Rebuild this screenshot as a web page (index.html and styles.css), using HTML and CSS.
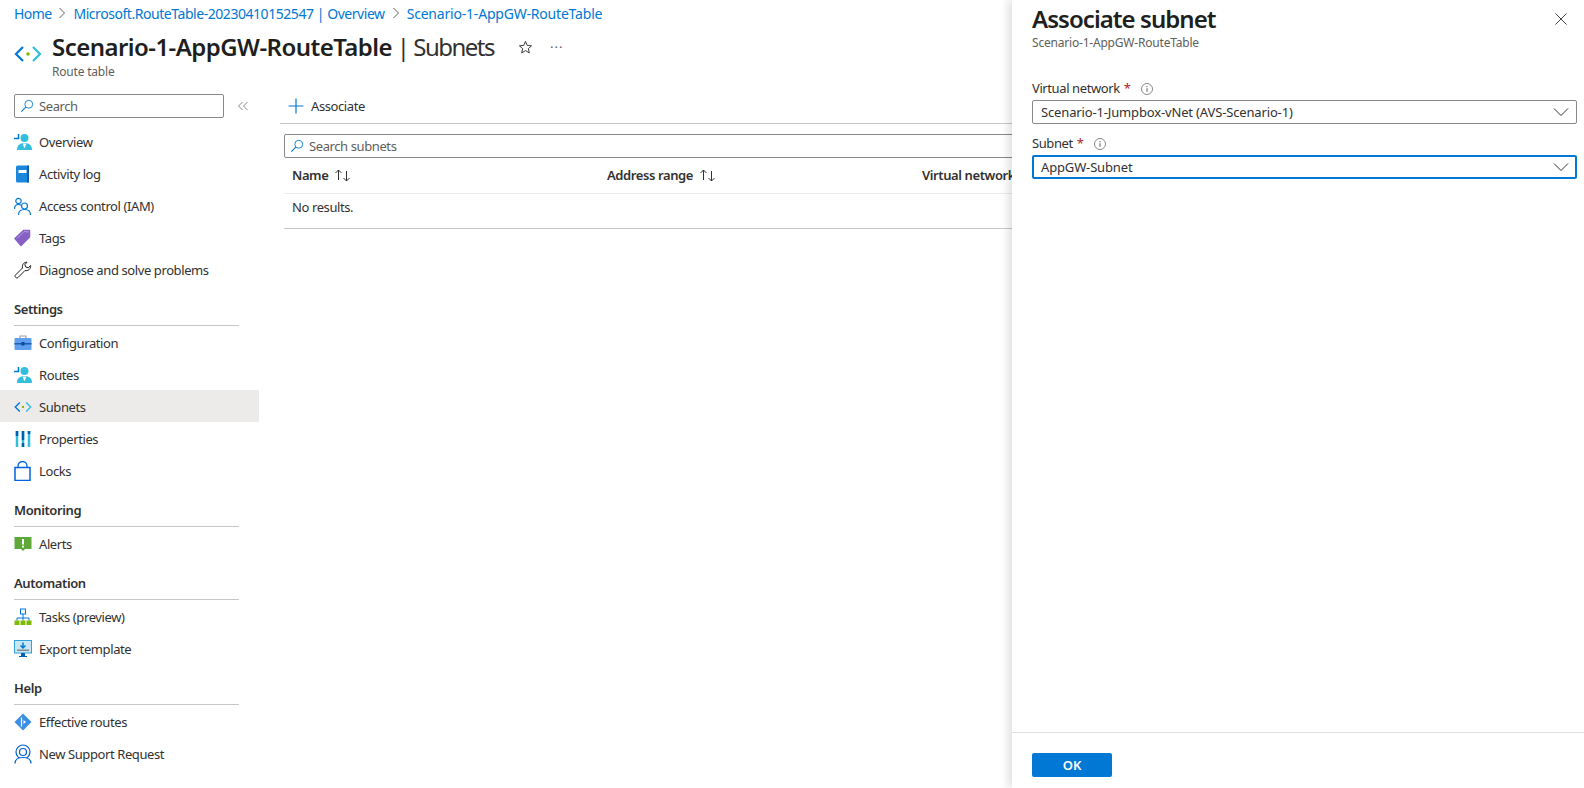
FILE: index.html
```html
<!DOCTYPE html>
<html lang="en">
<head>
<meta charset="UTF-8">
<meta name="viewport" content="width=device-width, initial-scale=1.0">
<title>Scenario-1-AppGW-RouteTable | Subnets</title>
<link rel="stylesheet" href="styles.css">
</head>
<body>
<svg class="defs" width="0" height="0">
  <symbol id="i-search" viewBox="0 0 16 16"><circle cx="10" cy="6" r="4.5" fill="none" stroke="#0078d4" stroke-width="1"/><path d="M6.7 9.3 1.5 14.5" stroke="#0078d4" stroke-width="1.2" fill="none"/></symbol>
  <symbol id="i-person" viewBox="0 0 18 18"><circle cx="10.5" cy="5" r="4" fill="#32bedd"/><path d="M3 17c0-5 3-7 7.500-7s7.500 2 7.500 7z" fill="#32bedd"/><path d="M8.500 10.500h4l-2 5z" fill="#fff"/><path d="M0 5.500h4.500V1" stroke="#0078d4" stroke-width="1.500" fill="none"/></symbol>
  <symbol id="i-sort" viewBox="0 0 18 14"><path d="M4.500 12V2M1.500 5l3-3 3 3" stroke="#323130" fill="none"/><path d="M12.500 3v10M9.500 10l3 3 3-3" stroke="#323130" fill="none"/></symbol>
  <symbol id="i-chevron" viewBox="0 0 16 16"><path d="M1 4.500 8 11.500l7-7" stroke="#323130" fill="none"/></symbol>
  <symbol id="i-crumb" viewBox="0 0 8 12"><path d="M1.500 1 6.500 6l-5 5" stroke="#605e5c" fill="none"/></symbol>
  <symbol id="i-info" viewBox="0 0 12 12"><circle cx="6" cy="6" r="5.500" fill="none" stroke="#8a8886"/><path d="M6 5.200v3.600" stroke="#605e5c"/><path d="M6 3v1.200" stroke="#605e5c"/></symbol>
  <symbol id="i-subnet" viewBox="0 0 28 18"><path d="M9 2 2 9l7 7" stroke="#0078d4" stroke-width="2.200" fill="none"/><path d="M19 2l7 7-7 7" stroke="#32bedd" stroke-width="2.200" fill="none"/><circle cx="14" cy="9" r="1.800" fill="#7fba00"/></symbol>
</svg>

<div class="breadcrumb">
  <a class="crumb-home">Home</a>
  <svg class="crumb-sep" width="8" height="12"><use href="#i-crumb"/></svg>
  <a class="crumb-long">Microsoft.RouteTable-20230410152547 | Overview</a>
  <svg class="crumb-sep" width="8" height="12"><use href="#i-crumb"/></svg>
  <a>Scenario-1-AppGW-RouteTable</a>
</div>

<div class="blade-head">
  <svg class="blade-icon" width="28" height="18"><use href="#i-subnet"/></svg>
  <div class="blade-titles">
    <div class="title-row">
      <h1><span class="title-name">Scenario-1-AppGW-RouteTable</span> | Subnets</h1>
      <svg class="star" width="15" height="15" viewBox="0 0 16 16"><path d="M8 1.500l1.900 4.300 4.600.4-3.500 3 1.100 4.600L8 11.300l-4.100 2.500L5 9.200l-3.500-3 4.600-.4z" fill="none" stroke="#323130"/></svg>
      <span class="more">&#183;&#183;&#183;</span>
    </div>
    <div class="blade-sub">Route table</div>
  </div>
</div>

<div class="blade-body">
  <nav class="sidebar">
    <div class="side-search-row">
      <div class="search-box side-search">
        <svg width="14" height="14"><use href="#i-search"/></svg>
        <span>Search</span>
      </div>
      <svg class="collapse" width="12" height="10" viewBox="0 0 12 10"><path d="M5.500 1 1.500 5l4 4M10.500 1l-4 4 4 4" stroke="#8a8886" fill="none"/></svg>
    </div>

    <div class="nav-row"><svg class="nav-icon" width="18" height="18"><use href="#i-person"/></svg>Overview</div>
    <div class="nav-row">
      <svg class="nav-icon" width="18" height="18" viewBox="0 0 18 18"><rect x="2" y="0.500" width="13" height="17" rx="1.500" fill="#1b87dc"/><rect x="4.500" y="5" width="8" height="3" fill="#fff"/><rect x="13" y="0.500" width="2" height="17" fill="#0f5fa8"/></svg>Activity log</div>
    <div class="nav-row">
      <svg class="nav-icon" width="18" height="18" viewBox="0 0 18 18"><circle cx="4.500" cy="4" r="2.700" fill="none" stroke="#0078d4" stroke-width="1.200"/><path d="M.5 12c0-3 1.500-4.500 4-4.500 1 0 1.800.2 2.500.7" fill="none" stroke="#0078d4" stroke-width="1.200"/><circle cx="10.500" cy="9" r="3" fill="none" stroke="#0078d4" stroke-width="1.200"/><path d="M4.500 18c0-3.500 2.500-5.500 6-5.500s6 2 6 5.500" fill="none" stroke="#0078d4" stroke-width="1.200"/></svg>Access control (IAM)</div>
    <div class="nav-row">
      <svg class="nav-icon" width="18" height="18" viewBox="0 0 18 18"><path d="M1 9.500 9.500 1.500 15.500 1.500 15.500 8 7 16.500z" fill="#8661c5" stroke="#8661c5" stroke-linejoin="round" stroke-width="1.500"/><path d="M3 9.500 10 2.500l5 .5" stroke="#b59ae0" fill="none"/></svg>Tags</div>
    <div class="nav-row">
      <svg class="nav-icon" width="18" height="18" viewBox="0 0 18 18"><path d="M1.500 14 8.500 7C7.800 4 9.800 1 13 1.200L10.800 3.700l1 2.300 2.400.8L16.600 4.500C17 8 14 10.300 11 9.500L4 16.500c-1.500 1.500-4 -1-2.500-2.500z" fill="none" stroke="#201f1e" stroke-width="1"/></svg>Diagnose and solve problems</div>

    <div class="nav-group">Settings</div>
    <div class="nav-row">
      <svg class="nav-icon" width="18" height="18" viewBox="0 0 18 18"><path d="M6 4V2h6v2" fill="none" stroke="#a19f9d" stroke-width="1.200"/><rect x="0.500" y="4" width="17" height="12" rx="1" fill="#5ea0ef"/><rect x="0.500" y="9" width="17" height="1.500" fill="#1b5fb5"/><rect x="7.500" y="8" width="3" height="3.500" fill="#0f4a94"/></svg>Configuration</div>
    <div class="nav-row"><svg class="nav-icon" width="18" height="18"><use href="#i-person"/></svg>Routes</div>
    <div class="nav-row nav-row-active"><svg class="nav-icon" width="18" height="12"><use href="#i-subnet"/></svg>Subnets</div>
    <div class="nav-row">
      <svg class="nav-icon" width="18" height="18" viewBox="0 0 18 18"><path d="M3 1v16M9 1v16M15 1v16" stroke="#32bedd" stroke-width="2.500"/><path d="M3 1v5M9 1v9M15 1v3" stroke="#0060b0" stroke-width="2.500"/><path d="M9 13v4" stroke="#0060b0" stroke-width="2.500"/></svg>Properties</div>
    <div class="nav-row">
      <svg class="nav-icon" width="18" height="20" viewBox="0 0 18 20"><path d="M4 6.500V5a4.500 4.500 0 0 1 9 0v1.500" fill="none" stroke="#0063e0" stroke-width="1.300"/><rect x="1" y="6.500" width="15" height="13" fill="#fff" stroke="#0063e0" stroke-width="1.500"/></svg>Locks</div>

    <div class="nav-group">Monitoring</div>
    <div class="nav-row">
      <svg class="nav-icon" width="18" height="16" viewBox="0 0 18 16"><path d="M.5 1h17v12H11l-2 2-2-2H.5z" fill="#5ea83a"/><path d="M9 3v5.500" stroke="#fff" stroke-width="2"/><path d="M9 9.800v1.800" stroke="#fff" stroke-width="2"/></svg>Alerts</div>

    <div class="nav-group">Automation</div>
    <div class="nav-row">
      <svg class="nav-icon" width="18" height="18" viewBox="0 0 18 18"><rect x="6.500" y="1" width="5" height="5" fill="#fff" stroke="#0078d4"/><path d="M9 6v4M3 12.500V10h12v2.500M9 10v2.500" stroke="#0078d4" fill="none"/><rect x="0.500" y="12.500" width="5" height="4.500" fill="#7fba00"/><rect x="6.500" y="12.500" width="5" height="4.500" fill="#7fba00"/><rect x="12.500" y="12.500" width="5" height="4.500" fill="#7fba00"/></svg>Tasks (preview)</div>
    <div class="nav-row">
      <svg class="nav-icon" width="18" height="18" viewBox="0 0 18 18"><rect x="0.500" y="0.500" width="17" height="12.500" fill="#c7e6f7" stroke="#32a0dd"/><path d="M9 2.500v5M6.500 5.500 9 8l2.500-2.500" stroke="#0078d4" stroke-width="1.500" fill="none"/><rect x="3" y="9.500" width="12" height="1.500" fill="#8a8886"/><path d="M7.500 13.500h3V16h-3zM5 16.500h8" stroke="#0060b0" fill="#0060b0"/></svg>Export template</div>

    <div class="nav-group">Help</div>
    <div class="nav-row">
      <svg class="nav-icon" width="18" height="18" viewBox="0 0 18 18"><path d="M9 .5 17.500 9 9 17.500.5 9z" fill="#3a8ee6"/><path d="M7.500 4.500v9" stroke="#fff" stroke-width="1.300"/><path d="M9.500 7l2.500 2-2.500 2z" fill="#fff"/></svg>Effective routes</div>
    <div class="nav-row">
      <svg class="nav-icon" width="18" height="20" viewBox="0 0 18 20"><circle cx="9" cy="8" r="7" fill="none" stroke="#0060d0" stroke-width="1.200"/><circle cx="9" cy="8" r="3.500" fill="none" stroke="#0060d0" stroke-width="1.200"/><path d="M1 19.500c0-4 3-6 8-6s8 2 8 6" fill="#fff" stroke="#0060d0" stroke-width="1.200"/></svg>New Support Request</div>
  </nav>

  <main class="content">
    <div class="toolbar">
      <svg width="16" height="16" viewBox="0 0 16 16"><path d="M8 .5v15M.5 8h15" stroke="#0078d4" stroke-width="1.200"/></svg>
      <span>Associate</span>
    </div>
    <div class="search-box table-search">
      <svg width="14" height="14"><use href="#i-search"/></svg>
      <span>Search subnets</span>
    </div>
    <div class="table-head">
      <div class="col-name">Name <svg width="18" height="14"><use href="#i-sort"/></svg></div>
      <div class="col-range">Address range <svg width="18" height="14"><use href="#i-sort"/></svg></div>
      <div class="col-vnet">Virtual network</div>
    </div>
    <div class="table-empty">No results.</div>
  </main>
</div>

<aside class="panel">
  <div class="panel-top">
    <div class="panel-head">
      <div>
        <h2>Associate subnet</h2>
        <div class="panel-sub">Scenario-1-AppGW-RouteTable</div>
      </div>
      <svg class="close" width="12" height="12" viewBox="0 0 13 13"><path d="M.5.5l12 12M12.500.5l-12 12" stroke="#323130"/></svg>
    </div>
    <label class="field-label">Virtual network <b>*</b> <svg width="12" height="12"><use href="#i-info"/></svg></label>
    <div class="dropdown">
      <span>Scenario-1-Jumpbox-vNet (AVS-Scenario-1)</span>
      <svg width="16" height="16"><use href="#i-chevron"/></svg>
    </div>
    <label class="field-label">Subnet <b>*</b> <svg width="12" height="12"><use href="#i-info"/></svg></label>
    <div class="dropdown dropdown-focus">
      <span>AppGW-Subnet</span>
      <svg width="16" height="16"><use href="#i-chevron"/></svg>
    </div>
  </div>
  <div class="panel-foot">
    <button class="ok-btn">OK</button>
  </div>
</aside>
</body>
</html>
```

FILE: styles.css
```css
* {
  box-sizing: border-box;
}
html, body {
  height: 100%;
}
body {
  margin: 0;
  height: 788px;
  overflow: hidden;
  font-family: "Noto Sans", "Open Sans", sans-serif;
  font-size: 13px;
  letter-spacing: -0.4px;
  color: #323130;
  background-color: #fff;
}
.defs {
  display: block;
  height: 0;
}

.breadcrumb {
  display: flex;
  align-items: center;
  height: 26px;
  padding-left: 14px;
  font-size: 14px;
  letter-spacing: -0.2px;
  color: #0078d4;
}
.crumb-home {
  letter-spacing: -0.6px;
}
.crumb-long {
  letter-spacing: -0.45px;
}
.crumb-sep {
  margin: 0 7px 0 7px;
}

.blade-head {
  display: flex;
  height: 57px;
}
.blade-icon {
  margin: 19px 0 0 14px;
}
.blade-titles {
  margin-left: 10px;
}
.title-row {
  display: flex;
  align-items: center;
  height: 42px;
}
h1 {
  margin: 0;
  font-size: 24px;
  font-weight: 400;
  letter-spacing: -1.5px;
  line-height: 42px;
}
.title-name {
  font-weight: 600;
  letter-spacing: -0.55px;
  color: #201f1e;
}
.star {
  margin-left: 24px;
}
.more {
  margin-left: 17px;
  font-size: 13px;
  color: #605e5c;
  letter-spacing: 1px;
}
.blade-sub {
  margin-top: -5px;
  font-size: 12px;
  letter-spacing: -0.2px;
  color: #605e5c;
}

.blade-body {
  display: flex;
}
.sidebar {
  width: 259px;
  flex-shrink: 0;
  padding-top: 11px;
}
.side-search-row {
  display: flex;
  align-items: center;
  padding-left: 14px;
  margin-bottom: 8px;
}
.search-box {
  display: flex;
  align-items: center;
  gap: 5px;
  height: 24px;
  padding-left: 5px;
  border: 1px solid #8a8886;
  border-radius: 2px;
  color: #605e5c;
}
.side-search {
  width: 210px;
}
.collapse {
  margin-left: 13px;
}

.nav-row {
  display: flex;
  align-items: center;
  height: 32px;
  padding-left: 14px;
}
.nav-row-active {
  margin: -1px 0 1px;
  padding-top: 2px;
  background-color: #edebe9;
}
.nav-icon {
  width: 18px;
  margin-right: 7px;
  flex-shrink: 0;
}
.nav-group {
  height: 33px;
  margin: 7px 20px 1px 14px;
  padding-top: 8px;
  border-bottom: 1px solid #c8c6c6;
  font-weight: 600;
  color: #323130;
  line-height: 16px;
}

.content {
  flex: 1;
  padding: 11px 0 0 21px;
}
.toolbar {
  display: flex;
  align-items: center;
  gap: 7px;
  height: 30px;
  padding: 0 0 6px 8px;
  border-bottom: 1px solid #c8c6c6;
}
.table-search {
  margin: 10px 0 0 4px;
  border-radius: 2px 0 0 2px;
}
.table-head {
  display: flex;
  align-items: center;
  height: 36px;
  padding-bottom: 2px;
  border-bottom: 1px solid #edebe9;
  margin-left: 4px;
  padding-left: 8px;
  font-weight: 600;
}
.table-head svg {
  vertical-align: -2px;
  margin-left: 3px;
}
.col-name,
.col-range {
  width: 315px;
  white-space: nowrap;
}
.col-vnet {
  white-space: nowrap;
}
.table-empty {
  height: 35px;
  margin-left: 4px;
  padding: 4px 0 0 8px;
  border-bottom: 1px solid #c8c6c6;
}

/* context pane sits over the blade */
.panel {
  position: absolute;
  top: 0;
  right: 0;
  bottom: 0;
  width: 572px;
  height: 788px;
  display: flex;
  flex-direction: column;
  background-color: #fff;
  box-shadow: -4px 0 8px rgba(0,0,0,0.12);
}
.panel-top {
  flex: 1;
  padding-left: 20px;
  padding-right: 7px;
}
.panel-head {
  display: flex;
  justify-content: space-between;
  height: 81px;
}
h2 {
  margin: 0;
  padding-top: 2px;
  padding-bottom: 1px;
  font-size: 24px;
  font-weight: 600;
  line-height: 33px;
  letter-spacing: -0.95px;
  color: #201f1e;
}
.panel-sub {
  margin-top: 0;
  font-size: 12px;
  line-height: 14px;
  letter-spacing: -0.2px;
  color: #605e5c;
}
.close {
  margin: 13px 10px 0 0;
}
.field-label {
  display: flex;
  align-items: center;
  gap: 4px;
  height: 19px;
  padding-bottom: 4px;
  line-height: 15px;
}
.field-label b {
  font-weight: 400;
  color: #a4262c;
}
.field-label svg {
  margin-left: 6px;
}
.dropdown {
  display: flex;
  align-items: center;
  justify-content: space-between;
  height: 24px;
  margin-bottom: 12px;
  padding: 0 7px 0 8px;
  border: 1px solid #8a8886;
  border-radius: 2px;
  letter-spacing: -0.15px;
  color: #323130;
}
.dropdown-focus {
  border: 2px solid #0078d4;
  padding-left: 7px;
  padding-right: 6px;
}
.panel-foot {
  height: 56px;
  padding: 20px 0 0 20px;
  border-top: 1px solid #e1dfdd;
}
.ok-btn {
  width: 80px;
  height: 24px;
  padding: 0;
  border: none;
  border-radius: 2px;
  background-color: #0078d4;
  color: #fff;
  font-family: inherit;
  font-size: 13px;
  font-weight: 600;
}
```
